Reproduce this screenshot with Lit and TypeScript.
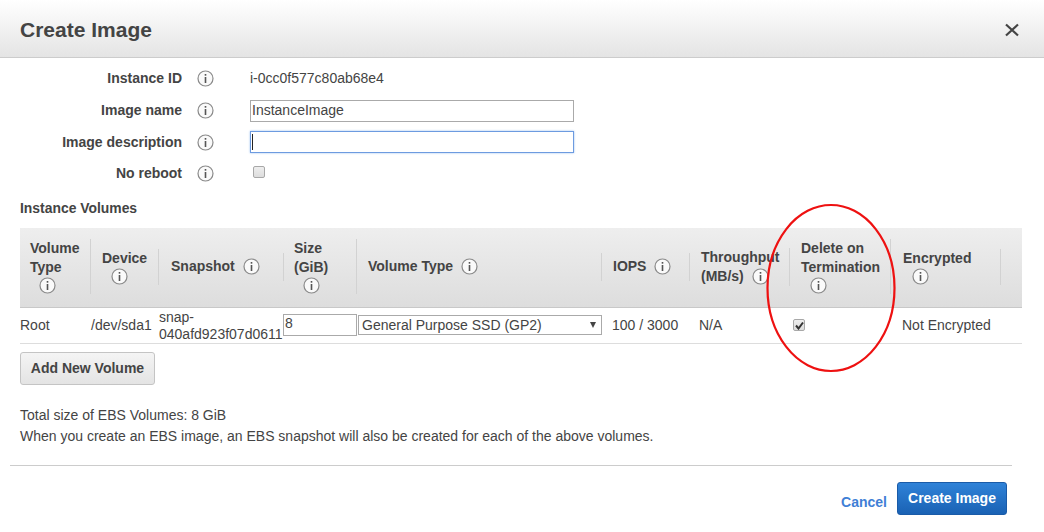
import { LitElement, html, css, svg } from "lit";
import { customElement } from "lit/decorators.js";

const info = html`<svg class="info" viewBox="0 0 17 17" width="17" height="17">
  ${svg`<circle cx="8.5" cy="8.5" r="7.5" fill="#fafafa" stroke="#8a8a8a" stroke-width="1.2"></circle>
  <rect x="7.7" y="7" width="1.6" height="6" fill="#555"></rect>
  <rect x="7.7" y="4" width="1.6" height="1.7" fill="#555"></rect>`}
</svg>`;

const columns = [
  { key: "type", lines: ["Volume", "Type"], pad: 10, iconRow: true, infoPad: 9 },
  { key: "device", lines: ["Device"], pad: 11, iconRow: true, infoPad: 9 },
  { key: "snapshot", lines: [], inline: "Snapshot", pad: 12 },
  { key: "size", lines: ["Size", "(GiB)"], pad: 10, iconRow: true, infoPad: 9 },
  { key: "vtype", lines: [], inline: "Volume Type", pad: 11 },
  { key: "iops", lines: [], inline: "IOPS", pad: 11 },
  { key: "tp", lines: ["Throughput"], inline: "(MB/s)", pad: 11 },
  { key: "del", lines: ["Delete on", "Termination"], pad: 11, iconRow: true, infoPad: 9 },
  { key: "enc", lines: ["Encrypted"], pad: 12, iconRow: true, infoPad: 9 },
  { key: "end", lines: [], pad: 0 },
];

@customElement("app-root")
export class AppRoot extends LitElement {
  static styles = css`
    :host {
      display: block;
      position: relative;
      width: 1044px;
      height: 532px;
      overflow: hidden;
      background: #fff;
      color: #444;
      font: 14px/19px "Liberation Sans", Arial, sans-serif;
    }
    .head {
      height: 55px;
      display: flex;
      align-items: center;
      justify-content: space-between;
      padding: 2px 24px 0 20px;
      background: linear-gradient(#fff, #e4e4e4);
      border-bottom: 1px solid #ccc;
    }
    h1 {
      margin: 0;
      font-size: 21px;
      line-height: 24px;
      font-weight: bold;
      color: #444;
    }
    .close {
      display: block;
    }
    .form {
      display: grid;
      grid-template-columns: 162px 68px 1fr;
      padding: 5px 20px 0;
      grid-auto-rows: 31.7px;
      align-items: center;
    }
    .form label {
      font-weight: bold;
      text-align: right;
    }
    .form .i {
      display: flex;
      padding-left: 15px;
    }
    .field {
      box-sizing: border-box;
      display: block;
      width: 324px;
      height: 22px;
      padding: 0 1px;
      border: 1px solid #aaa;
      background: #fff;
      font: inherit;
      color: #444;
      outline: none;
    }
    .field.focus {
      border-color: #6d9be0;
      box-shadow: 0 0 2px #9cc0f0;
      display: flex;
      align-items: center;
    }
    .caret {
      width: 1px;
      height: 16px;
      background: #222;
    }
    .box {
      box-sizing: border-box;
      display: flex;
      align-items: center;
      justify-content: center;
      width: 12px;
      height: 12px;
      border: 1px solid #a8a8a8;
      border-radius: 2px;
      background: linear-gradient(#eee, #ddd);
    }
    .form .box {
      margin: -3px 0 0 3px;
    }
    h2 {
      margin: 9px 20px 10px;
      font-size: 13.9px;
      line-height: 19px;
      font-weight: bold;
    }
    .table {
      margin: 0 22px 0 20px;
      display: grid;
      grid-template-columns: 71px 68px 125px 73px 245px 88px 100px 101px 110px 21px;
    }
    .th {
      height: 78px;
      padding-bottom: 1px;
      display: flex;
      align-items: center;
      background: linear-gradient(#eeeeee, #dddddd);
      border-bottom: 1px solid #c8c8c8;
      font-weight: bold;
      white-space: nowrap;
    }
    .th .in {
      flex: 1;
      min-height: 28px;
      box-sizing: border-box;
      display: flex;
      flex-direction: column;
      justify-content: center;
      border-right: 1px solid #d2d2d2;
      box-shadow: 1px 0 0 #fafafa;
    }
    .th.last .in {
      border: 0;
      box-shadow: none;
    }
    .inline {
      display: flex;
      align-items: center;
      gap: 8px;
    }
    .icon-row {
      display: flex;
    }
    .info {
      display: block;
      flex: none;
    }
    .td {
      height: 35px;
      display: flex;
      align-items: center;
      border-bottom: 1px solid #ddd;
      white-space: nowrap;
    }
    .td.snap {
      box-sizing: border-box;
      padding-top: 2px;
      height: 36px;
      line-height: 17px;
    }
    .td.iops {
      padding-left: 10px;
    }
    .td.na {
      padding-left: 9px;
    }
    .td.del {
      padding-left: 3px;
    }
    .td.enc {
      padding-left: 11px;
    }
    .size {
      box-sizing: border-box;
      width: 74px;
      height: 22px;
      margin-left: -1px;
      border: 1px solid #aaa;
      padding: 0 1px;
      line-height: 16px;
    }
    .select {
      box-sizing: border-box;
      width: 244px;
      height: 20px;
      margin-left: 1px;
      padding: 0 5px 0 3px;
      border: 1px solid #aaa;
      display: flex;
      align-items: center;
      justify-content: space-between;
    }
    .arrow {
      width: 0;
      height: 0;
      border: 3.5px solid transparent;
      border-top: 6px solid #444;
      border-bottom: 0;
    }
    .add {
      display: block;
      box-sizing: border-box;
      margin: 8px 0 0 20px;
      width: 135px;
      height: 33px;
      padding: 0;
      border: 1px solid #c4c4c4;
      border-radius: 3px;
      background: linear-gradient(#f4f4f4, #e4e4e4);
      font: bold 14px "Liberation Sans", Arial, sans-serif;
      color: #444;
    }
    .note {
      margin: 20px 20px 0;
      line-height: 21px;
    }
    .rule {
      margin: 18px 32px 0 10px;
      border-top: 1px solid #ccc;
    }
    .actions {
      display: flex;
      justify-content: flex-end;
      align-items: center;
      gap: 10px;
      margin: 16px 37px 0 0;
    }
    .cancel {
      color: #3f7fd6;
      font-weight: bold;
      padding-top: 8px;
    }
    .primary {
      box-sizing: border-box;
      width: 110px;
      height: 33px;
      padding: 0;
      border: 1px solid #1a5ba8;
      border-radius: 3px;
      background: linear-gradient(#2f82d8, #1a62b4);
      color: #fff;
      font: bold 14px "Liberation Sans", Arial, sans-serif;
    }
    .ring {
      position: absolute;
      left: 765px;
      top: 202px;
    }
  `;

  private renderTh(c: (typeof columns)[number]) {
    return html`<div class="th ${c.key === "end" ? "last" : ""}">
      <div class="in" style="padding-left:${c.pad}px">
        ${c.lines.map((l) => html`<div>${l}</div>`)}
        ${c.inline ? html`<div class="inline">${c.inline}${info}</div>` : null}
        ${c.iconRow ? html`<div class="icon-row" style="padding-left:${c.infoPad}px">${info}</div>` : null}
      </div>
    </div>`;
  }

  render() {
    return html`
      <div class="head">
        <h1>Create Image</h1>
        <svg class="close" width="16" height="16" viewBox="0 0 16 16">
          <path d="M2 2.5 14 13.5M14 2.5 2 13.5" stroke="#444" stroke-width="2.2" fill="none"></path>
        </svg>
      </div>
      <div class="form">
        <label>Instance ID</label><div class="i">${info}</div><div>i-0cc0f577c80ab68e4</div>
        <label>Image name</label><div class="i">${info}</div><div class="field">InstanceImage</div>
        <label>Image description</label><div class="i">${info}</div>
        <div class="field focus"><span class="caret"></span></div>
        <label>No reboot</label><div class="i">${info}</div><div><span class="box"></span></div>
      </div>
      <h2>Instance Volumes</h2>
      <div class="table">
        ${columns.map((c) => this.renderTh(c))}
        <div class="td">Root</div>
        <div class="td">/dev/sda1</div>
        <div class="td snap"><div>snap-<br />040afd923f07d0611</div></div>
        <div class="td"><div class="size">8</div></div>
        <div class="td"><div class="select"><span>General Purpose SSD (GP2)</span><span class="arrow"></span></div></div>
        <div class="td iops">100 / 3000</div>
        <div class="td na">N/A</div>
        <div class="td del">
          <span class="box">
            <svg width="9" height="9" viewBox="0 0 9 9">
              <path d="M1 4.5 3.5 7.5 8 1.5" stroke="#333" stroke-width="2" fill="none"></path>
            </svg>
          </span>
        </div>
        <div class="td enc">Not Encrypted</div>
        <div class="td"></div>
      </div>
      <button class="add">Add New Volume</button>
      <div class="note">
        Total size of EBS Volumes: 8 GiB<br />
        When you create an EBS image, an EBS snapshot will also be created for each of the above volumes.
      </div>
      <div class="rule"></div>
      <div class="actions">
        <span class="cancel">Cancel</span>
        <button class="primary">Create Image</button>
      </div>
      <svg class="ring" width="132" height="172" viewBox="0 0 132 172">
        <ellipse cx="66" cy="86" rx="63.5" ry="83" fill="none" stroke="#ee1111" stroke-width="2.2"></ellipse>
      </svg>
    `;
  }
}
